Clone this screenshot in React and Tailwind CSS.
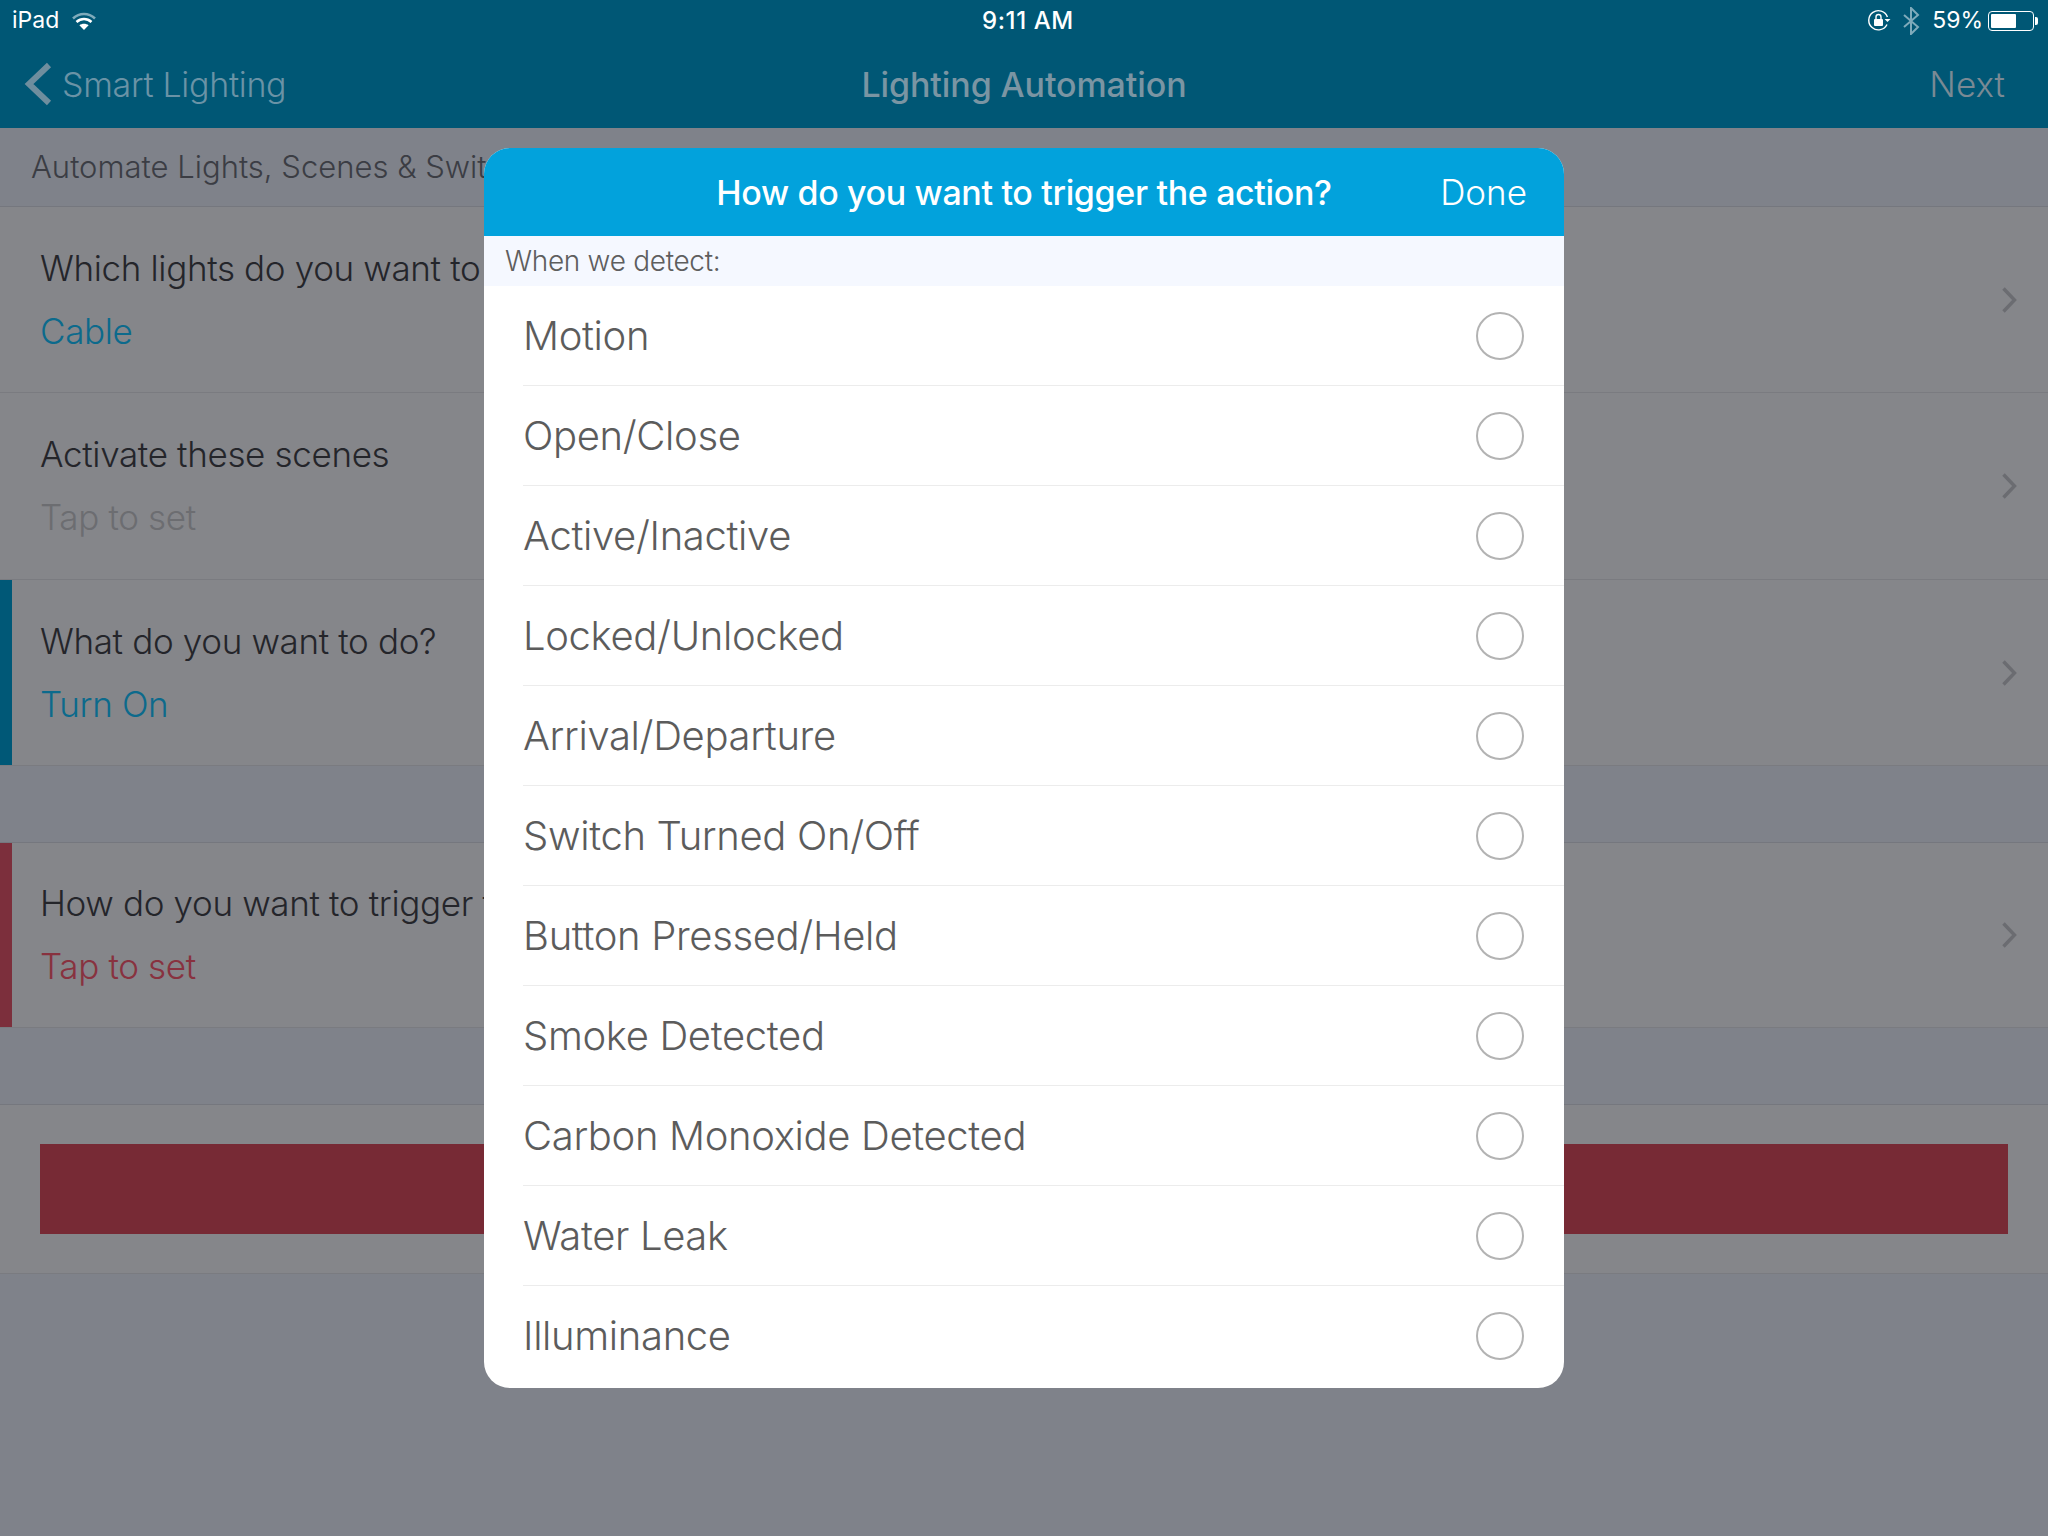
import React from 'react';

const triggers = [
  'Motion',
  'Open/Close',
  'Active/Inactive',
  'Locked/Unlocked',
  'Arrival/Departure',
  'Switch Turned On/Off',
  'Button Pressed/Held',
  'Smoke Detected',
  'Carbon Monoxide Detected',
  'Water Leak',
  'Illuminance',
];

const Chevron = () => (
  <svg width="18" height="28" viewBox="0 0 18 28" fill="none" className="shrink-0">
    <path d="M2.5 2.5L13.5 14L2.5 25.5" stroke="#6b6c71" strokeWidth="3.4" />
  </svg>
);

const StatusBar = () => (
  <div className="h-[40px] pt-[1px] flex items-center justify-between pl-[12px] pr-[10px] text-white text-[23px] relative">
    <div className="flex items-center gap-[12px]">
      <span>iPad</span>
      <svg width="26" height="20" viewBox="0 0 26 20" fill="none">
        <path d="M2 7.5C8.5 1.5 17.5 1.5 24 7.5" stroke="#7fabbb" strokeWidth="2.6" />
        <path d="M5.5 11C10 7 16 7 20.5 11" stroke="white" strokeWidth="2.6" />
        <path d="M13 19l-4.6-4.8c2.6-2 6.6-2 9.2 0z" fill="white" />
      </svg>
    </div>
    <span className="absolute left-[982px] font-medium text-[24px] tracking-[0.6px]">9:11 AM</span>
    <div className="flex items-center">
      <svg width="24" height="24" viewBox="0 0 24 24" fill="none" className="mr-[11px]">
        <path d="M20 15.5A9.6 9.6 0 1 1 20.4 8" stroke="white" strokeWidth="1.4" />
        <path d="M17.5 10h6l-3 3z" fill="white" />
        <rect x="7" y="10" width="9" height="7" rx="1" fill="white" />
        <path d="M9 10V8a2.5 2.5 0 0 1 5 0v2" stroke="white" strokeWidth="1.4" />
      </svg>
      <svg width="18" height="28" viewBox="0 0 18 28" fill="none" className="mr-[12px]">
        <path d="M2 8l14 12-7 7V1l7 7L2 20" stroke="#7fabbb" strokeWidth="2" />
      </svg>
      <span className="mr-[5px]">59%</span>
      <div className="w-[46px] h-[20px] border border-white rounded-[4px] p-[2px]">
        <div className="w-[25px] h-full bg-white rounded-[1px]" />
      </div>
      <div className="w-[3px] h-[8px] bg-white rounded-r-[2px] ml-[1px]" />
    </div>
  </div>
);

const NavBar = () => (
  <div className="h-[88px] flex items-center justify-between pl-[24px] pr-[43px] relative">
    <div className="flex items-center gap-[10px] text-[#6a93a6] font-light text-[34px] tracking-[-0.3px]">
      <svg width="28" height="44" viewBox="0 0 28 44" fill="none" className="mt-[-1px]">
        <path d="M25 3L5 22l20 19" stroke="#6f8e9e" strokeWidth="6" />
      </svg>
      <span>Smart Lighting</span>
    </div>
    <span className="absolute left-0 right-0 text-center text-[#7a95a3] font-medium text-[34px] tracking-[-0.1px]">Lighting Automation</span>
    <span className="text-[#7a8a94] font-light text-[35px]">Next</span>
  </div>
);

const Row = ({ title, value, valueColor, accent, height }) => (
  <div className={`${height} bg-[#85868a] border-b border-[#7a7b80] flex items-center relative pl-[40px] pr-[29px]`}>
    {accent && <div className={`absolute left-0 top-0 bottom-0 w-[12px] ${accent}`} />}
    <div className="flex-1 flex flex-col gap-[15px] mt-[-1px] tracking-[-0.35px]">
      <span className="text-[35px] leading-[48px] font-light text-[#24252a] whitespace-nowrap">{title}</span>
      <span className={`text-[35px] leading-[48px] font-light ${valueColor}`}>{value}</span>
    </div>
    <Chevron />
  </div>
);

const TriggerModal = () => (
  <div className="absolute left-[484px] top-[148px] w-[1080px] h-[1240px] rounded-[26px] overflow-hidden bg-white flex flex-col">
    <div className="h-[88px] bg-[#02a2dc] flex items-center justify-center relative text-white">
      <span className="text-[34px] font-medium tracking-[-0.35px]">How do you want to trigger the action?</span>
      <span className="absolute right-[37px] text-[35px] font-light">Done</span>
    </div>
    <div className="h-[50px] bg-[#f5f8ff] flex items-center pl-[21px] text-[28px] font-light tracking-[-0.3px] text-[#5e5e5e]">When we detect:</div>
    <div className="flex-1 flex flex-col">
      {triggers.map((name, i) => (
        <div key={name} className="h-[100px] pl-[39px]">
          <div className={`h-full flex items-center justify-between pr-[40px] ${i < triggers.length - 1 ? 'border-b border-[#ececec]' : ''}`}>
            <span className="text-[40px] font-light tracking-[-0.35px] text-[#5c5c5c]">{name}</span>
            <div className="w-[48px] h-[48px] rounded-full border-2 border-[#b3b3b3]" />
          </div>
        </div>
      ))}
    </div>
  </div>
);

export default function App() {
  return (
    <div className="w-[2048px] h-[1536px] relative overflow-hidden bg-[#7f828a] font-['Inter',sans-serif]">
      <div className="bg-[#005775]">
        <StatusBar />
        <NavBar />
      </div>
      <div className="h-[79px] border-b border-[#75777e] flex items-center pl-[31px] text-[31px] font-light text-[#3b3d44] whitespace-nowrap">
        <span className="pt-[1px]">Automate Lights, Scenes &amp; Switches</span>
      </div>
      <Row height="h-[186px]" title="Which lights do you want to control?" value="Cable" valueColor="text-[#0c6a8c]" />
      <Row height="h-[187px]" title="Activate these scenes" value="Tap to set" valueColor="text-[#6c6d71]" />
      <Row height="h-[186px]" title="What do you want to do?" value="Turn On" valueColor="text-[#0c6a8c]" accent="bg-[#005877]" />
      <div className="h-[77px] border-b border-[#75777e]" />
      <Row height="h-[185px]" title="How do you want to trigger the action?" value="Tap to set" valueColor="text-[#88323f]" accent="bg-[#7c2f3c]" />
      <div className="h-[77px] border-b border-[#75777e]" />
      <div className="h-[169px] bg-[#85868a] border-b border-[#7a7b80] px-[40px] py-[39px]">
        <div className="h-[90px] bg-[#772a35]" />
      </div>
      <TriggerModal />
    </div>
  );
}
